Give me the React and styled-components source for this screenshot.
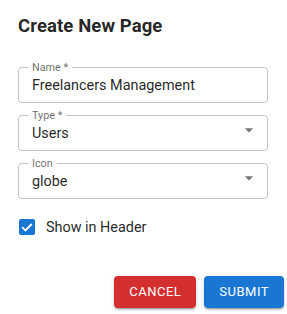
import React from "react";
import styled, { createGlobalStyle } from "styled-components";

const Global = createGlobalStyle`
  html, body { margin: 0; padding: 0; background: #fff; }
  body { font-family: Roboto, "Liberation Sans", Arial, sans-serif; color: rgba(0,0,0,0.87); }
  * { box-sizing: border-box; }
`;

const Dialog = styled.div`
  width: 287px;
  height: 314px;
  display: flex;
  flex-direction: column;
  padding: 12px 3px 0 18px;
`;

const Title = styled.h2`
  margin: 0;
  font-size: 18.5px;
  font-weight: 700;
  line-height: 28px;
  letter-spacing: 0.1px;
  color: rgba(0,0,0,0.87);
`;

const Form = styled.div`
  display: flex;
  flex-direction: column;
  gap: 12px;
  width: 250px;
  margin-top: 27px;
`;

const Field = styled.div`
  position: relative;
  height: 36px;
  border: 1px solid rgba(0,0,0,0.23);
  border-radius: 4px;
  padding: 0 ${(p) => (p.$select ? "8px" : "13px")} 1px 13px;
  display: flex;
  align-items: center;
`;

const Label = styled.span`
  position: absolute;
  top: -7px;
  left: 9px;
  padding: 0 4px;
  background: #fff;
  font-size: 10.8px;
  line-height: 13px;
  color: rgba(0,0,0,0.6);
`;

const Value = styled.div`
  flex: 1;
  font-size: 14.4px;
  line-height: 20px;
  margin-top: 2px;
  color: rgba(0,0,0,0.87);
  white-space: nowrap;
`;

const Arrow = styled.svg`
  flex: none;
  width: 20px;
  height: 20px;
  margin-top: -5px;
  fill: rgba(0,0,0,0.54);
`;

const CheckRow = styled.label`
  display: flex;
  align-items: center;
  gap: 11px;
  height: 42px;
  margin-top: -5px;
  font-size: 14.4px;
  color: rgba(0,0,0,0.87);
`;

const CheckBox = styled.svg`
  width: 16px;
  height: 16px;
  flex: none;
  margin-left: 1px;
`;

const Actions = styled.div`
  display: flex;
  justify-content: flex-end;
  gap: 8px;
  margin-top: 28px;
`;

const Button = styled.button`
  font-family: Roboto, "Liberation Sans", Arial, sans-serif;
  font-size: 13px;
  font-weight: 400;
  letter-spacing: 0.5px;
  line-height: 20px;
  text-transform: uppercase;
  color: #fff;
  background: ${(p) => (p.$variant === "error" ? "#d32f2f" : "#1976d2")};
  border: none;
  border-radius: 4px;
  padding: 0 15px;
  height: 32px;
  box-shadow: 0px 3px 1px -2px rgba(0,0,0,0.2), 0px 2px 2px 0px rgba(0,0,0,0.14), 0px 1px 5px 0px rgba(0,0,0,0.12);
`;

const DropArrow = () => (
  <Arrow viewBox="0 0 24 24"><path d="M7 10l5 5 5-5z" /></Arrow>
);

export default function App() {
  return (
    <Dialog>
      <Global />
      <Title>Create New Page</Title>
      <Form>
        <Field>
          <Label>Name *</Label>
          <Value>Freelancers Management</Value>
        </Field>
        <Field $select>
          <Label>Type *</Label>
          <Value>Users</Value>
          <DropArrow />
        </Field>
        <Field $select>
          <Label>Icon</Label>
          <Value>globe</Value>
          <DropArrow />
        </Field>
        <CheckRow>
          <CheckBox viewBox="0 0 16 16">
            <rect x="0" y="0" width="16" height="16" rx="2" fill="#1976d2" />
            <path d="M3.2 8.2l3.2 3.2 6.4-6.4" stroke="#fff" strokeWidth="1.8" fill="none" />
          </CheckBox>
          Show in Header
        </CheckRow>
      </Form>
      <Actions>
        <Button $variant="error">Cancel</Button>
        <Button>Submit</Button>
      </Actions>
    </Dialog>
  );
}
